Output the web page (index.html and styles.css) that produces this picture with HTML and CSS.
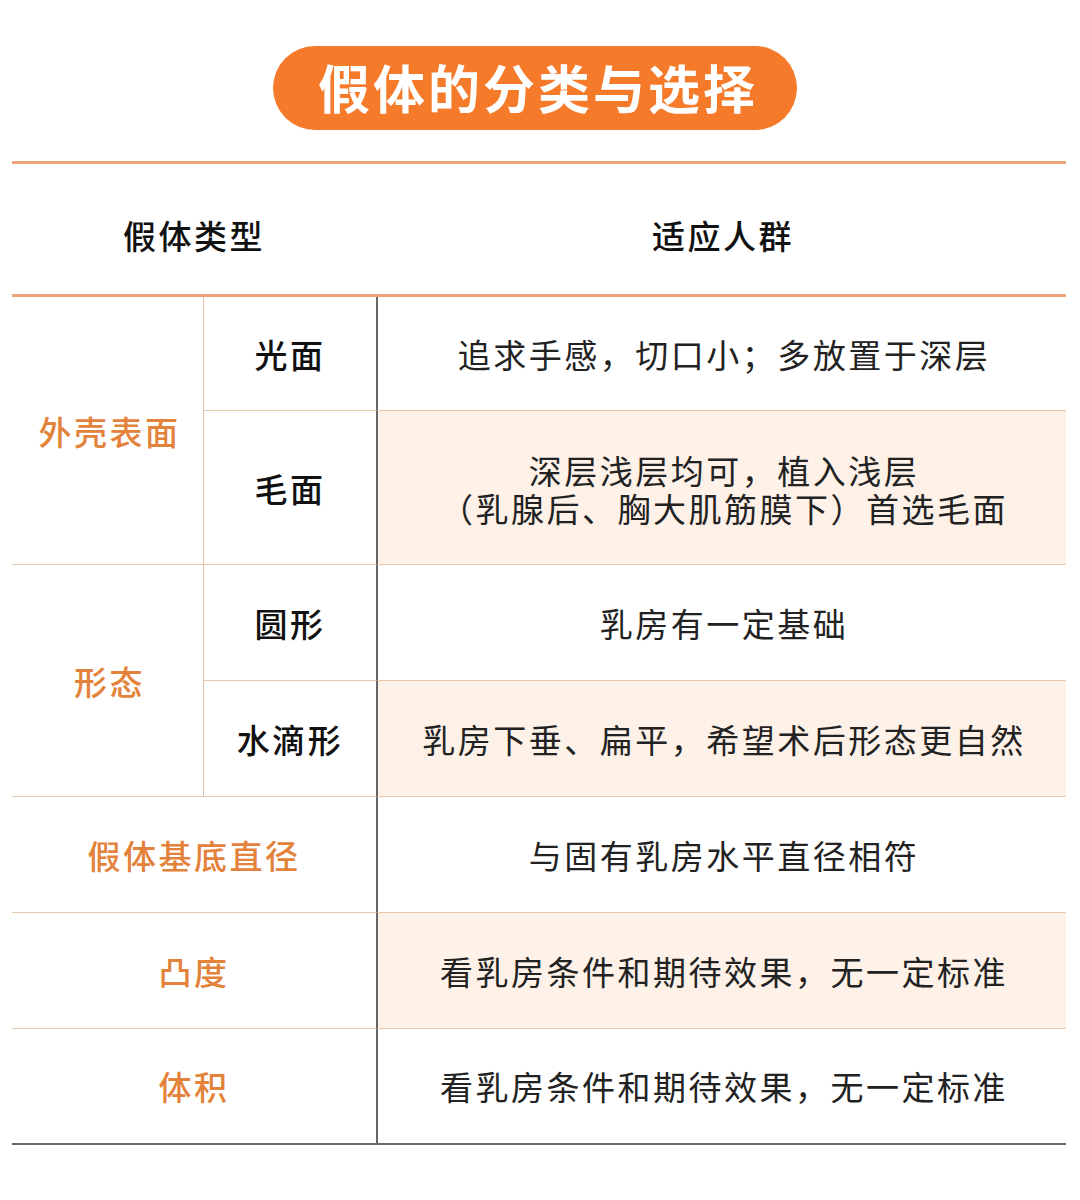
FILE: index.html
```html
<!DOCTYPE html>
<html lang="zh">
<head>
<meta charset="utf-8">
<link rel="stylesheet" href="styles.css">
</head>
<body>
<div class="page">
  <div class="title-wrap"><div class="title">假体的分类与选择</div></div>
  <div class="table">
    <div class="head">
      <div class="h-type">假体类型</div>
      <div class="h-who">适应人群</div>
    </div>
    <div class="body">
      <div class="c1 r1">外壳表面</div>
      <div class="c2 r1">光面</div>
      <div class="c3 r1">追求手感，切口小；多放置于深层</div>
      <div class="c2 r2">毛面</div>
      <div class="c3 r2 tint"><div class="two"><span class="ln">深层浅层均可，植入浅层</span><span class="ln">（乳腺后、胸大肌筋膜下）首选毛面</span></div></div>
      <div class="c1 r3">形态</div>
      <div class="c2 r3">圆形</div>
      <div class="c3 r3">乳房有一定基础</div>
      <div class="c2 r4">水滴形</div>
      <div class="c3 r4 tint">乳房下垂、扁平，希望术后形态更自然</div>
      <div class="c12 r5">假体基底直径</div>
      <div class="c3 r5">与固有乳房水平直径相符</div>
      <div class="c12 r6">凸度</div>
      <div class="c3 r6 tint">看乳房条件和期待效果，无一定标准</div>
      <div class="c12 r7 last">体积</div>
      <div class="c3 r7 last">看乳房条件和期待效果，无一定标准</div>
    </div>
  </div>
</div>
</body>
</html>
```
FILE: styles.css
```css
html, body {
  margin: 0;
  padding: 0;
  background: #ffffff;
}
body {
  font-family: "Noto Sans CJK SC", "Noto Sans", sans-serif;
  color: #1a1a1a;
}
.page {
  width: 1080px;
  padding-top: 46px;
}
.title-wrap {
  display: flex;
  justify-content: center;
  padding-right: 10px;
}
.title {
  width: 524px;
  height: 84px;
  border-radius: 42px;
  background: #f57b2a;
  color: #ffffff;
  font-size: 52px;
  font-weight: 700;
  letter-spacing: 3px;
  line-height: 82px;
  text-align: center;
  text-indent: 6px;
}
.table {
  margin: 31px 14px 0 12px;
  width: 1054px;
}
.head {
  display: grid;
  grid-template-columns: 364px 690px;
  height: 136px;
  box-sizing: border-box;
  border-top: 3px solid #eba47a;
  border-bottom: 3px solid #eba47a;
  align-items: center;
  padding-top: 12px;
  font-size: 33px;
  font-weight: 500;
  letter-spacing: 2.5px;
  color: #111;
}
.h-type, .h-who {
  text-align: center;
}
.h-who {
  padding-left: 4px;
}
.body {
  display: grid;
  grid-template-columns: 192px 172px 690px;
  grid-template-rows: 114px 154px 116px 116px 116px 116px 116px;
}
.body > div {
  display: flex;
  align-items: center;
  justify-content: center;
  text-align: center;
  box-sizing: border-box;
  border-bottom: 1px solid #e8c6aa;
  font-size: 33px;
  letter-spacing: 2.5px;
}
.c1 {
  grid-column: 1;
  color: #e3823a;
  font-weight: 500;
  border-right: 1px solid #dcc3a8;
  padding-left: 4px;
}
.r1.c1 { grid-row: 1 / span 2; }
.r3.c1 { grid-row: 3 / span 2; }
.c2 {
  grid-column: 2;
  font-weight: 500;
  color: #111;
}
.c12 {
  grid-column: 1 / span 2;
  color: #e3823a;
  font-weight: 500;
}
.c3 {
  grid-column: 3;
  border-left: 2px solid #666;
  color: #222;
  font-weight: 400;
  padding-left: 4px;
}
.two {
  display: flex;
  flex-direction: column;
  align-items: center;
  padding-top: 2px;
}
.ln {
  display: block;
  height: 38px;
  line-height: 38px;
}
.c2.r1, .c3.r1 { grid-row: 1; }
.c2.r2, .c3.r2 { grid-row: 2; }
.c2.r3, .c3.r3 { grid-row: 3; }
.c2.r4, .c3.r4 { grid-row: 4; }
.r5 { grid-row: 5; }
.r6 { grid-row: 6; }
.r7 { grid-row: 7; }
.tint {
  background: #fdf1e8;
}
.body > .last {
  border-bottom: 2px solid #666;
}
```
